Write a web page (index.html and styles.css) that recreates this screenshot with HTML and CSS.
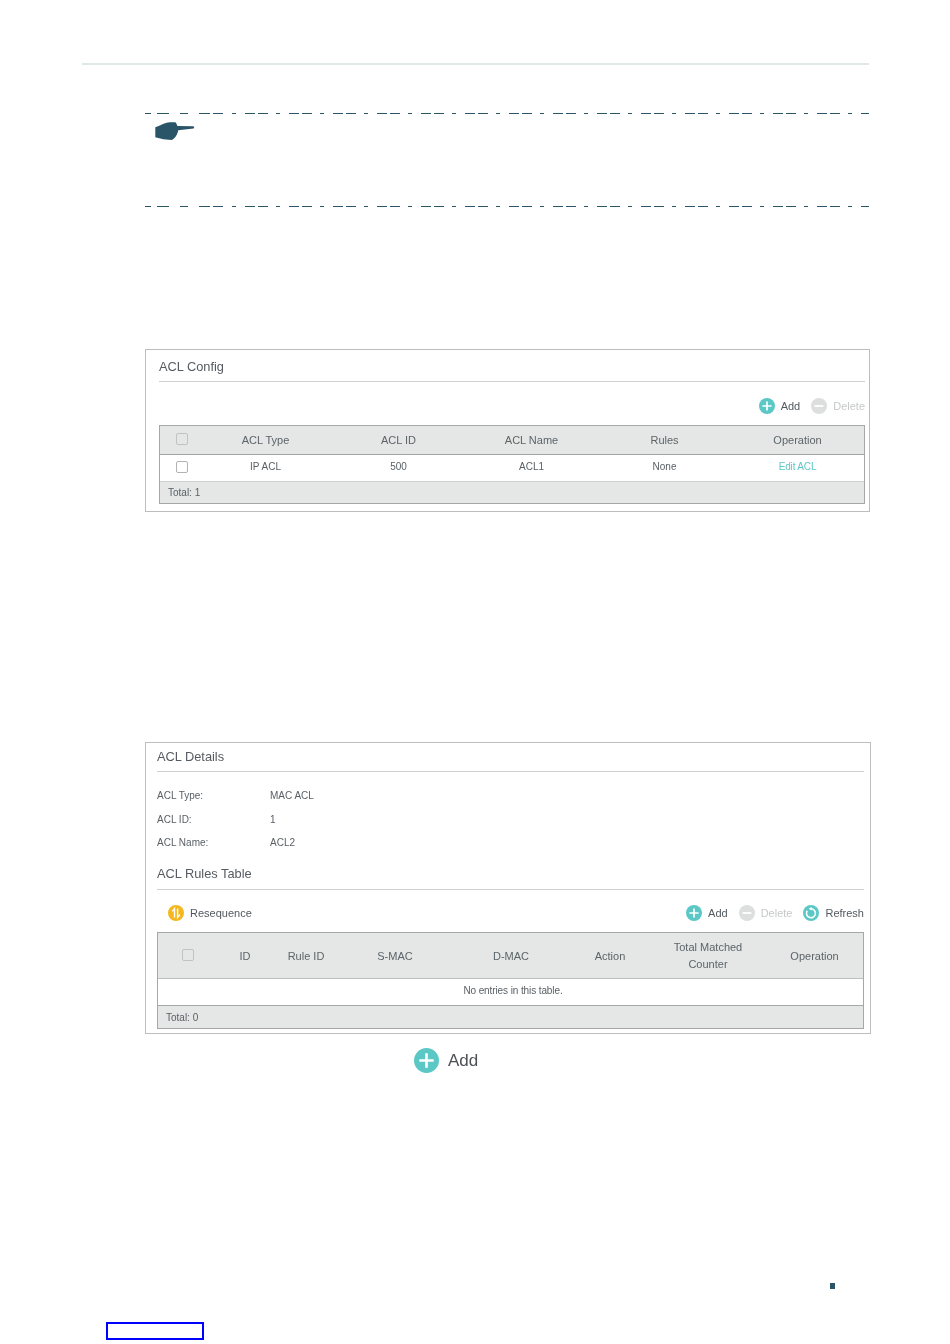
FILE: index.html
```html
<!DOCTYPE html>
<html lang="en">
<head>
<meta charset="utf-8">
<title>ACL Configuration</title>
<link rel="stylesheet" href="styles.css">
</head>
<body>
<svg width="0" height="0" class="defs" aria-hidden="true">
  <symbol id="i-add" viewBox="0 0 16 16"><circle cx="8" cy="8" r="8" fill="#5bc8c6"/><path d="M8 3.4v9.2M3.4 8h9.2" stroke="#fff" stroke-width="1.7"/></symbol>
  <symbol id="i-del" viewBox="0 0 16 16"><circle cx="8" cy="8" r="8" fill="#dddfdf"/><path d="M3.6 8h8.8" stroke="#fff" stroke-width="1.8"/></symbol>
  <symbol id="i-ref" viewBox="0 0 16 16"><circle cx="8" cy="8" r="8" fill="#5bc8c6"/><path d="M8 3.7A4.5 4.5 0 1 1 4.2 5.7" fill="none" stroke="#fff" stroke-width="1.6"/><path d="M8.6 1.9v3.6L5.6 3.7z" fill="#fff"/></symbol>
  <symbol id="i-seq" viewBox="0 0 16 16"><circle cx="8" cy="8" r="8" fill="#f4b71e"/><path d="M6.5 12.6V3.6L4.2 6.4M9.6 3.4v9L11.9 9.6" stroke="#fff" stroke-width="1.4" fill="none"/></symbol>
  <symbol id="i-dash" viewBox="0 0 724 1"><path d="M0 .5h6M12 .5h12M35 .5h8M54 .5h11M68 .5h10M87 .5h4" stroke="#2a5568" fill="none"/><path d="M100 .5H724" stroke="#2a5568" stroke-dasharray="10 3 10 8 4 9" fill="none"/></symbol>
</svg>

<div class="rule"></div>

<section class="note">
  <svg class="dash"><use href="#i-dash"/></svg>
  <svg class="hand" viewBox="155 122 40 19"><path d="M155.3 127.3C159 126.4 162.5 123.4 166.7 122.7C169.5 122.2 172.5 122.2 175.3 122.3C176.4 123.2 177 124.6 177.4 126L193.3 126.2C194.4 126.8 194.5 128 193.6 128.6L178.3 130.2C177.8 132.2 177.2 134.2 176 136C175 137.8 173.6 139.2 171.7 140L163.3 139.3L155.3 137.3Z"/></svg>
  <svg class="dash dash-end"><use href="#i-dash"/></svg>
</section>

<section class="panel panel-config">
  <h2 class="title title-config">ACL Config</h2>
  <div class="toolbar toolbar-config">
    <span class="tool"><svg class="ico"><use href="#i-add"/></svg>Add</span>
    <span class="tool off"><svg class="ico"><use href="#i-del"/></svg>Delete</span>
  </div>
  <div class="tbl">
    <table class="t-config">
      <thead>
        <tr><th class="c0"><span class="chk chk-h"></span></th><th>ACL Type</th><th>ACL ID</th><th>ACL Name</th><th>Rules</th><th>Operation</th></tr>
      </thead>
      <tbody>
        <tr><td class="c0"><span class="chk"></span></td><td>IP ACL</td><td>500</td><td>ACL1</td><td>None</td><td class="link">Edit ACL</td></tr>
      </tbody>
      <tfoot>
        <tr><td colspan="6">Total: 1</td></tr>
      </tfoot>
    </table>
  </div>
</section>

<section class="panel panel-details">
  <h2 class="title title-details">ACL Details</h2>
  <dl class="info">
    <dt>ACL Type:</dt><dd>MAC ACL</dd>
    <dt>ACL ID:</dt><dd>1</dd>
    <dt>ACL Name:</dt><dd>ACL2</dd>
  </dl>
  <h2 class="title title-rules">ACL Rules Table</h2>
  <div class="toolbar toolbar-rules">
    <span class="tool tool-seq"><svg class="ico"><use href="#i-seq"/></svg>Resequence</span>
    <span class="tool"><svg class="ico"><use href="#i-add"/></svg>Add</span>
    <span class="tool off"><svg class="ico"><use href="#i-del"/></svg>Delete</span>
    <span class="tool"><svg class="ico"><use href="#i-ref"/></svg>Refresh</span>
  </div>
  <div class="tbl">
    <table class="t-rules">
      <colgroup><col class="w0"><col class="w1"><col class="w2"><col class="w3"><col class="w4"><col class="w5"><col class="w6"><col class="w7"></colgroup>
      <thead>
        <tr><th class="c0"><span class="chk chk-h"></span></th><th>ID</th><th>Rule ID</th><th>S-MAC</th><th>D-MAC</th><th>Action</th><th class="two">Total Matched<br>Counter</th><th>Operation</th></tr>
      </thead>
      <tbody>
        <tr><td colspan="8">No entries in this table.</td></tr>
      </tbody>
      <tfoot>
        <tr><td colspan="8">Total: 0</td></tr>
      </tfoot>
    </table>
  </div>
</section>

<div class="add-line"><svg class="ico-big"><use href="#i-add"/></svg><span>Add</span></div>

<div class="page-mark"></div>
<div class="link-box"></div>
</body>
</html>
```
FILE: styles.css
```css
* { box-sizing: border-box; }
html, body { margin: 0; padding: 0; background: #fff; }
body { height: 1344px; overflow: hidden; font-family: "Liberation Sans", Arial, sans-serif; color: #5a6065; }
.defs { position: absolute; }

.rule { height: 2px; margin: 63px 81px 0 82px; background: #dfe9e9; }

.note { width: 724px; margin: 48px 0 0 145px; }
.dash { display: block; width: 724px; height: 1px; }
.hand { display: block; width: 40px; height: 19px; margin: 8px 0 0 10px; fill: #2a5568; }
.dash-end { margin-top: 65px; }

.panel { border: 1px solid #bcbebe; filter: blur(.4px); }
.panel-config { width: 725px; margin: 142px 0 0 145px; padding: 0 4px 7px 13px; }
.panel-details { width: 726px; margin: 230px 0 0 145px; padding: 0 6px 4px 11px; }

.title { margin: 0; font-size: 12.8px; line-height: 16px; font-weight: normal; border-bottom: 1px solid #cfd1d1; color: #555b60; }
.title-config { padding: 9px 0 6px; height: 32px; }
.title-details { padding: 6px 0 6px; height: 29px; }
.title-rules { margin-top: 10px; padding-bottom: 7px; height: 24px; }

.info { display: grid; grid-template-columns: 113px 1fr; grid-auto-rows: 24px; margin: 12px 0 0; font-size: 10px; line-height: 24px; }
.info dt, .info dd { margin: 0; }
.info dt:nth-of-type(3), .info dd:nth-of-type(3) { line-height: 22px; }

.toolbar { display: flex; justify-content: flex-end; gap: 11px; height: 16px; font-size: 11px; line-height: 16px; }
.toolbar-config { margin: 16px 0 11px; }
.toolbar-rules { margin: 15px 0 11px; padding-left: 11px; }
.tool { display: flex; gap: 6px; color: #53595e; }
.tool.off { color: #c6c8c8; }
.tool-seq { margin-right: auto; }
.ico { display: block; width: 16px; height: 16px; }

.tbl { border: 1px solid #a4a8a8; }
table { width: 100%; table-layout: fixed; border-collapse: separate; border-spacing: 0; }
th, td { padding: 0; text-align: center; font-weight: normal; }
th { font-size: 11px; background: #e4e7e6; color: #5d6468; }
td { font-size: 10px; color: #5a6065; }
tfoot td { text-align: left; padding-left: 8px; background: #e4e7e6; }
.c0 { text-align: left; }
.chk { display: block; width: 12px; height: 12px; border: 1px solid #b0b3b3; border-radius: 2px; background: #fff; }
.chk-h { background: #e4e7e6; border-color: #c0c3c3; }
.link { color: #5bc8c6; letter-spacing: -.15px; }

.t-config th { height: 29px; width: 133px; border-bottom: 1px solid #9fa3a3; }
.t-config th.c0 { width: 39px; padding: 0 0 2px 16px; }
.t-config td.c0 { padding: 0 0 3px 16px; }
.t-config tbody td { height: 27px; border-bottom: 1px solid #cdd0d0; padding-bottom: 3px; }
.t-config tfoot td { height: 21px; }

.w0 { width: 58px; } .w1 { width: 58px; } .w2 { width: 64px; } .w3 { width: 114px; }
.w4 { width: 118px; } .w5 { width: 80px; } .w6 { width: 116px; } .w7 { width: 97px; }
.t-rules th { height: 46px; padding-top: 1px; border-bottom: 1px solid #bdc0c0; line-height: 17px; }
.t-rules th.c0 { padding: 0 0 2px 24px; }
.t-rules tbody td { height: 27px; border-bottom: 1px solid #a4a8a8; padding: 0 0 3px 5px; letter-spacing: -.1px; }
.t-rules tfoot td { height: 22px; }

.add-line { display: flex; align-items: center; gap: 9px; height: 25px; margin-top: 14px; padding-left: 414px; font-size: 17px; color: #4c5157; filter: blur(.4px); }
.ico-big { display: block; width: 25px; height: 25px; }

.page-mark { width: 5px; height: 6px; margin: 210px 0 0 830px; background: #2a5568; }
.link-box { width: 98px; height: 18px; margin: 33px 0 0 106px; border: 2px solid #0000ff; }
```
